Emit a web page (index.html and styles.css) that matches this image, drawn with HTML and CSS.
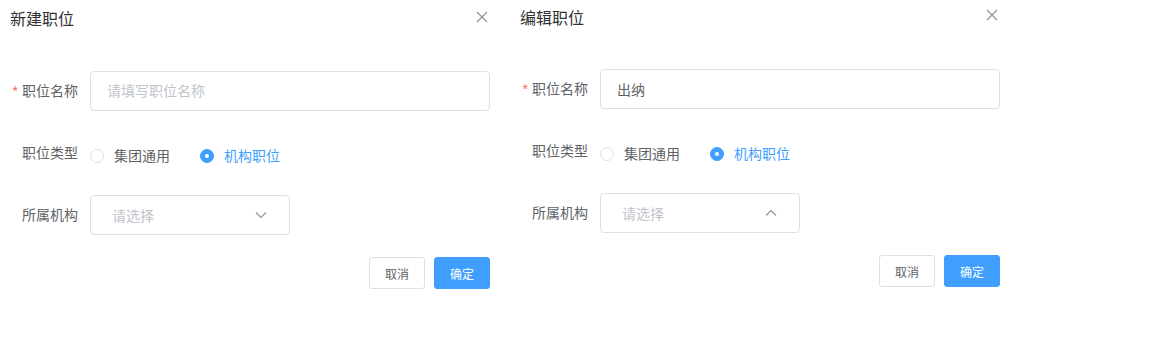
FILE: index.html
```html
<!DOCTYPE html>
<html lang="zh-CN">
<head>
    <meta charset="UTF-8">
    <meta name="viewport" content="width=device-width, initial-scale=1.0">
    <title>职位</title>
    <link rel="stylesheet" href="styles.css">
</head>
<body>
    <div class="page">
        <section class="dialog">
            <header class="dialog-header">
                <span class="dialog-title">新建职位</span>
                <button class="dialog-close" type="button" aria-label="关闭">
                    <svg width="12" height="12" viewBox="0 0 12 12"><path d="M1 1L11 11M11 1L1 11" stroke="#909399" stroke-width="1.2" fill="none"/></svg>
                </button>
            </header>
            <form class="form">
                <div class="form-item">
                    <label class="form-label is-required">职位名称</label>
                    <div class="form-content">
                        <input class="input" type="text" placeholder="请填写职位名称">
                    </div>
                </div>
                <div class="form-item">
                    <label class="form-label">职位类型</label>
                    <div class="form-content radio-group">
                        <label class="radio"><span class="radio-dot"></span><span class="radio-text">集团通用</span></label>
                        <label class="radio is-checked"><span class="radio-dot"></span><span class="radio-text">机构职位</span></label>
                    </div>
                </div>
                <div class="form-item">
                    <label class="form-label">所属机构</label>
                    <div class="form-content">
                        <div class="select">
                            <span class="select-placeholder">请选择</span>
                            <svg class="select-arrow" width="12" height="8" viewBox="0 0 12 8"><path d="M1 1.5L6 6.5L11 1.5" stroke="#909399" stroke-width="1.1" fill="none"/></svg>
                        </div>
                    </div>
                </div>
            </form>
            <footer class="dialog-footer">
                <button class="btn" type="button">取消</button>
                <button class="btn btn-primary" type="button">确定</button>
            </footer>
        </section>

        <section class="dialog dialog-edit">
            <header class="dialog-header">
                <span class="dialog-title">编辑职位</span>
                <button class="dialog-close" type="button" aria-label="关闭">
                    <svg width="12" height="12" viewBox="0 0 12 12"><path d="M1 1L11 11M11 1L1 11" stroke="#909399" stroke-width="1.2" fill="none"/></svg>
                </button>
            </header>
            <form class="form">
                <div class="form-item">
                    <label class="form-label is-required">职位名称</label>
                    <div class="form-content">
                        <input class="input" type="text" value="出纳">
                    </div>
                </div>
                <div class="form-item">
                    <label class="form-label">职位类型</label>
                    <div class="form-content radio-group">
                        <label class="radio"><span class="radio-dot"></span><span class="radio-text">集团通用</span></label>
                        <label class="radio is-checked"><span class="radio-dot"></span><span class="radio-text">机构职位</span></label>
                    </div>
                </div>
                <div class="form-item">
                    <label class="form-label">所属机构</label>
                    <div class="form-content">
                        <div class="select is-open">
                            <span class="select-placeholder">请选择</span>
                            <svg class="select-arrow" width="12" height="8" viewBox="0 0 12 8"><path d="M1 1.5L6 6.5L11 1.5" stroke="#909399" stroke-width="1.1" fill="none"/></svg>
                        </div>
                    </div>
                </div>
            </form>
            <footer class="dialog-footer">
                <button class="btn" type="button">取消</button>
                <button class="btn btn-primary" type="button">确定</button>
            </footer>
        </section>
    </div>
</body>
</html>
```

FILE: styles.css
```css
body {
    margin: 0;
    background-color: #fff;
    font-family: "Liberation Sans", "Noto Sans CJK SC", sans-serif;
    color: #606266;
}
.page {
    display: flex;
    align-items: flex-start;
}
.dialog {
    width: 490px;
    padding-right: 20px;
}
.dialog-edit {
    margin-top: -2px;
}
.dialog-header {
    display: flex;
    justify-content: space-between;
    align-items: flex-start;
    height: 40px;
    padding-left: 10px;
}
.dialog-title {
    margin-top: 8px;
    font-size: 16px;
    line-height: 24px;
    color: #303133;
}
.dialog-edit .dialog-title {
    margin-top: 9px;
}
.dialog-close {
    margin: 11px 2px 0 0;
    padding: 0;
    border: none;
    background: none;
    line-height: 0;
    cursor: pointer;
}
.form {
    margin: 31px 0 0;
}
.form-item {
    display: flex;
    margin-bottom: 22px;
}
.form-label {
    width: 90px;
    box-sizing: border-box;
    padding-right: 12px;
    text-align: right;
    font-size: 14px;
    line-height: 40px;
    color: #606266;
}
.form-label.is-required::before {
    content: "*";
    color: #f56c6c;
    margin-right: 4px;
}
.form-content {
    flex: 1;
    display: flex;
    align-items: center;
    min-height: 40px;
}
.input {
    width: 400px;
    height: 40px;
    box-sizing: border-box;
    padding: 0 16px;
    border: 1px solid #dcdfe6;
    border-radius: 4px;
    font-family: inherit;
    font-size: 14px;
    color: #606266;
    outline: none;
}
.input::placeholder {
    color: #c0c4cc;
}
.radio-group {
    padding-top: 5px;
    box-sizing: border-box;
}
.radio {
    display: flex;
    align-items: center;
    margin-right: 30px;
    font-size: 14px;
    line-height: 1;
    color: #606266;
    cursor: pointer;
}
.radio-dot {
    width: 14px;
    height: 14px;
    box-sizing: border-box;
    border: 1px solid #dcdfe6;
    border-radius: 50%;
    background: #fff;
    position: relative;
}
.radio-text {
    margin-left: 10px;
}
.radio.is-checked .radio-dot {
    border-color: #409eff;
    background: #409eff;
}
.radio.is-checked .radio-dot::after {
    content: "";
    position: absolute;
    left: 4px;
    top: 4px;
    width: 4px;
    height: 4px;
    border-radius: 50%;
    background: #fff;
}
.radio.is-checked .radio-text {
    color: #409eff;
}
.select {
    display: flex;
    align-items: center;
    justify-content: space-between;
    width: 200px;
    height: 40px;
    box-sizing: border-box;
    padding: 0 22px 0 21px;
    border: 1px solid #dcdfe6;
    border-radius: 4px;
    font-size: 14px;
}
.select-placeholder {
    color: #c0c4cc;
}
.select.is-open .select-arrow {
    transform: rotate(180deg);
}
.dialog-footer {
    display: flex;
    justify-content: flex-end;
    gap: 9px;
}
.btn {
    height: 32px;
    width: 56px;
    padding: 0;
    border: 1px solid #dcdfe6;
    border-radius: 3px;
    background: #fff;
    color: #606266;
    font-family: inherit;
    font-size: 12px;
    cursor: pointer;
}
.btn-primary {
    border-color: #409eff;
    background: #409eff;
    color: #fff;
}
```
